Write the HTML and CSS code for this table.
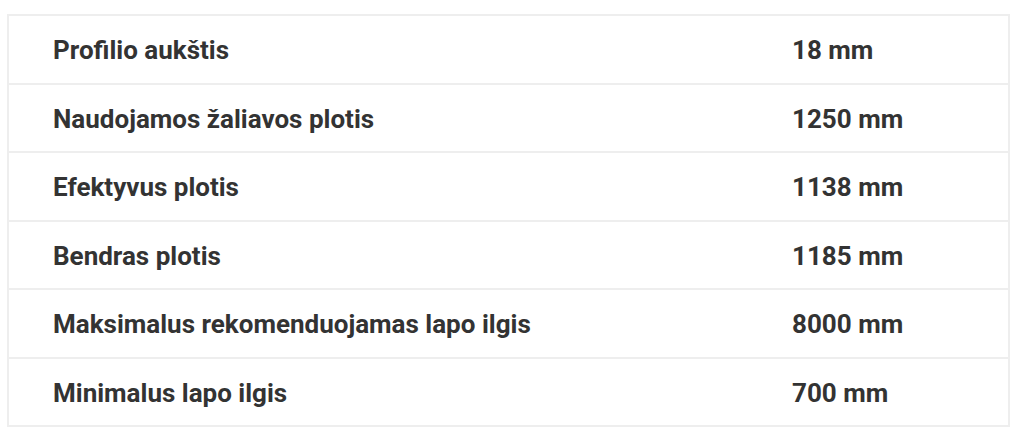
FILE: index.html
```html
<!DOCTYPE html>
<html>
<head>
<meta charset="utf-8">
<link rel="stylesheet" href="styles.css">
</head>
<body>
<table class="specs">
  <tbody>
    <tr><td class="name">Profilio aukštis</td><td class="val">18 mm</td></tr>
    <tr><td class="name">Naudojamos žaliavos plotis</td><td class="val">1250 mm</td></tr>
    <tr><td class="name">Efektyvus plotis</td><td class="val">1138 mm</td></tr>
    <tr><td class="name">Bendras plotis</td><td class="val">1185 mm</td></tr>
    <tr><td class="name">Maksimalus rekomenduojamas lapo ilgis</td><td class="val">8000 mm</td></tr>
    <tr><td class="name">Minimalus lapo ilgis</td><td class="val">700 mm</td></tr>
  </tbody>
</table>
</body>
</html>
```

FILE: styles.css
```css
body {
  margin: 0;
  padding: 14px 14px 0 7px;
  background: #fff;
  font-family: Roboto, "Liberation Sans", sans-serif;
}
.specs {
  width: 1003px;
  border-collapse: collapse;
  border: 2px solid #eeeeee;
}
.specs td {
  height: 64.5px;
  padding: 2px 0 0 44px;
  border-top: 2px solid #eeeeee;
  font-size: 26px;
  font-weight: 700;
  color: #333333;
  vertical-align: middle;
  line-height: 1;
}
.specs td.name {
  width: 695px;
}
```
